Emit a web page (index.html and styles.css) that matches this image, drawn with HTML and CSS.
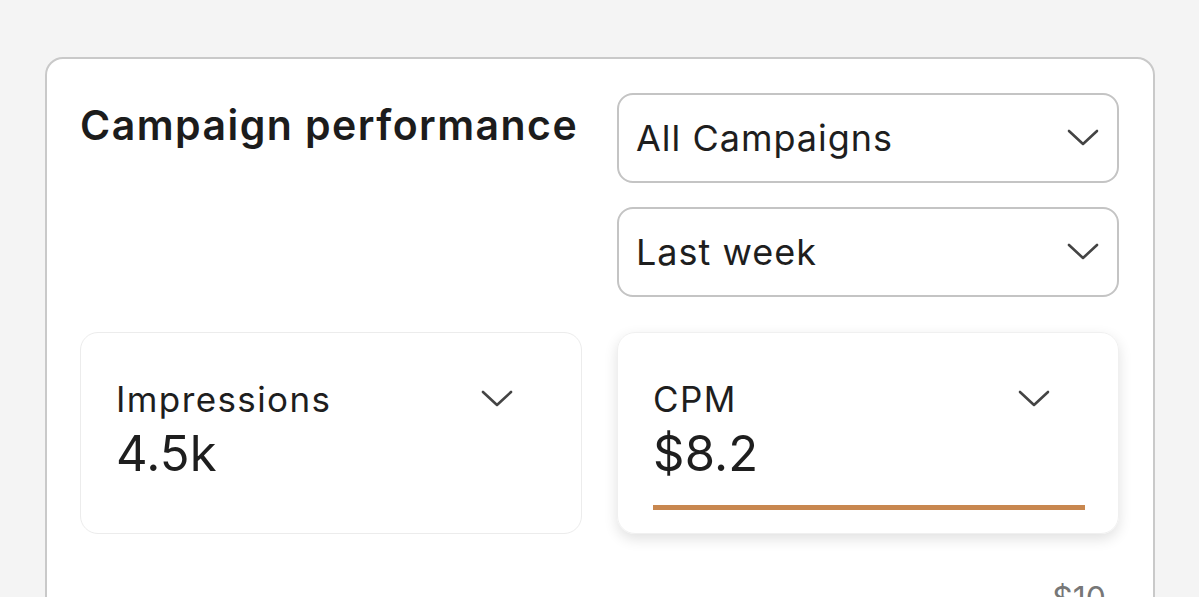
FILE: index.html
```html
<!DOCTYPE html>
<html>
<head>
<meta charset="utf-8">
<link rel="stylesheet" href="styles.css">
</head>
<body>
<div class="panel">
  <div class="grid">
    <h1 class="title">Campaign performance</h1>
    <div class="selects">
      <div class="select">
        <span>All Campaigns</span>
        <svg class="chev" viewBox="0 0 32 18"><path d="M2 2 L16 15 L30 2"/></svg>
      </div>
      <div class="select">
        <span>Last week</span>
        <svg class="chev" viewBox="0 0 32 18"><path d="M2 2 L16 15 L30 2"/></svg>
      </div>
    </div>
    <div class="metric">
      <div class="metric-head">
        <span class="metric-label">Impressions</span>
        <svg class="chev small" viewBox="0 0 32 18"><path d="M2 2 L16 15 L30 2"/></svg>
      </div>
      <div class="metric-value">4.5k</div>
    </div>
    <div class="metric active">
      <div class="metric-head">
        <span class="metric-label">CPM</span>
        <svg class="chev small" viewBox="0 0 32 18"><path d="M2 2 L16 15 L30 2"/></svg>
      </div>
      <div class="metric-value">$8.2</div>
      <div class="bar"></div>
    </div>
  </div>
  <div class="chart">
    <span class="axis">$10</span>
  </div>
</div>
</body>
</html>
```
FILE: styles.css
```css
html, body {
  margin: 0;
  padding: 0;
  background: #f4f4f4;
  font-family: "Inter", "Noto Sans", sans-serif;
  color: #1e1e1e;
  overflow: hidden;
}
body {
  padding: 57px 0 0 45px;
  height: 597px;
  box-sizing: border-box;
}
.panel {
  width: 1110px;
  box-sizing: border-box;
  background: #fff;
  border: 2px solid #c9c9c9;
  border-radius: 18px;
  padding: 34px 33px 0 33px;
  height: 560px;
  overflow: hidden;
}
.grid {
  display: grid;
  grid-template-columns: 502px 502px;
  column-gap: 35px;
  row-gap: 35px;
}
.title {
  margin: 0;
  font-size: 41px;
  font-weight: 600;
  line-height: 1;
  padding-top: 12px;
  letter-spacing: 1.45px;
  color: #1c1c1c;
}
.selects {
  display: flex;
  flex-direction: column;
  gap: 24px;
}
.select {
  height: 90px;
  box-sizing: border-box;
  border: 2px solid #c4c4c4;
  border-radius: 16px;
  display: flex;
  align-items: center;
  justify-content: space-between;
  padding: 0 18px 0 17px;
  font-size: 36px;
  letter-spacing: 1px;
  color: #1e1e1e;
}
.chev {
  width: 32px;
  height: 18px;
  fill: none;
  stroke: #444;
  stroke-width: 2.6;
  stroke-linecap: round;
  stroke-linejoin: round;
}
.metric {
  height: 202px;
  box-sizing: border-box;
  border: 1.5px solid #ececec;
  border-radius: 18px;
  padding: 44px 33px 0 35px;
}
.metric.active {
  border-color: #f0f0f0;
  box-shadow: 0 5px 14px rgba(0, 0, 0, 0.12);
}
.metric-head {
  display: flex;
  align-items: center;
  justify-content: space-between;
  padding-right: 35px;
}
.metric-label {
  font-size: 35px;
  line-height: 44px;
  letter-spacing: 1.4px;
}
.metric-value {
  font-size: 49px;
  line-height: 60px;
  margin-top: 3px;
  letter-spacing: 0.2px;
}
.bar {
  height: 5px;
  background: #c8874f;
  margin-top: 21px;
}
.chart {
  display: flex;
  justify-content: flex-end;
  padding-top: 45px;
  padding-right: 14px;
}
.axis {
  font-size: 32px;
  color: #777;
}
```
